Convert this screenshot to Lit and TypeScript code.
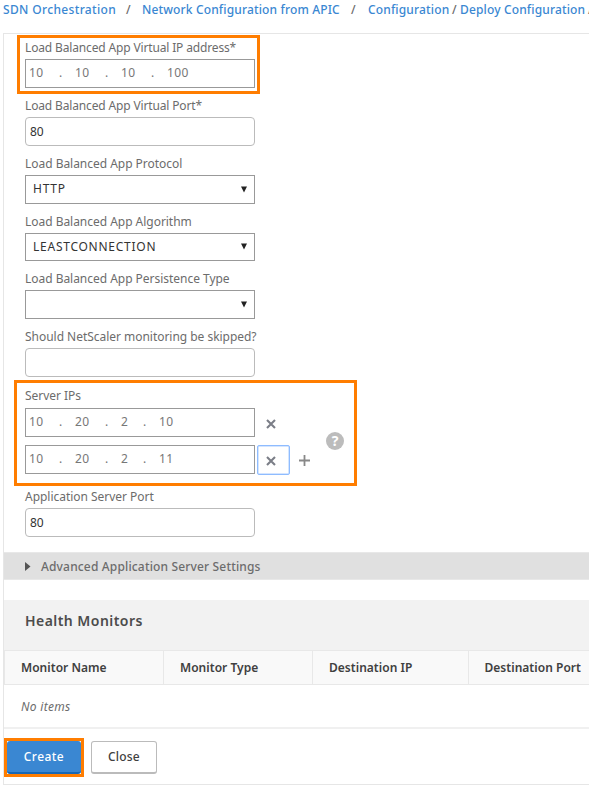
import { LitElement, html, css, svg } from "lit";
import { customElement, property } from "lit/decorators.js";
import { classMap } from "lit/directives/class-map.js";

const crossIcon = html`<svg width="10" height="10" viewBox="0 0 10 10">
  ${svg`<path d="M1 1L9 9M9 1L1 9" stroke="#7b7e87" stroke-width="2.1" fill="none" />`}
</svg>`;

@customElement("ip-input")
export class IpInput extends LitElement {
  @property() value = "";

  static styles = css`
    :host {
      display: flex;
      align-items: center;
      box-sizing: border-box;
      width: 230px;
      height: 28.5px;
      border: 1px solid #999;
      background: #fff;
      padding: 0 0 1px 3px;
      font-size: 12px;
      color: #777;
      letter-spacing: 0.4px;
    }
    .octet { width: 30px; }
    .octet.narrow { width: 22px; }
    .dot { width: 16px; }
  `;

  render() {
    const parts = this.value.split(".");
    return parts.map(
      (p, i) => html`<span class=${classMap({ octet: true, narrow: p.length === 1 })}>${p}</span
        >${i < parts.length - 1 ? html`<span class="dot">.</span>` : ""}`
    );
  }
}

@customElement("app-root")
export class AppRoot extends LitElement {
  static styles = css`
    :host {
      display: block;
      width: 589px;
      height: 788px;
      overflow: hidden;
      background: #fff;
      font-family: "Noto Sans", "Open Sans", sans-serif;
      font-size: 12px;
      line-height: 18px;
      color: #6c6c6c;
      white-space: nowrap;
    }
    svg { display: block; }
    .crumbs { display: flex; height: 33px; padding: 1px 0 0 3px; box-sizing: border-box; font-weight: 500; letter-spacing: 0.15px; }
    .crumbs a, .crumbs span { flex-shrink: 0; }
    .crumbs a { color: #3a87d2; }
    .c1 { width: 123px; letter-spacing: 0.35px; }
    .c2 { width: 209px; }
    .s1 { width: 16px; }
    .s2 { width: 17px; }
    .c3 { width: 84px; }
    .s3 { width: 8px; }
    .c4 { width: 128px; }
    .panel {
      display: flex;
      flex-direction: column;
      box-sizing: border-box;
      height: 752px;
      margin-left: 3px;
      border: 1px solid #e6e6e6;
      border-right: 0;
    }
    .form { height: 518px; padding: 4px 0 0 21px; box-sizing: border-box; }
    .field { position: relative; width: 230px; height: 58px; }
    .field.short { height: 57.5px; }
    .label { height: 21px; padding-top: 1px; box-sizing: border-box; letter-spacing: -0.03px; }
    .label.tight { letter-spacing: -0.15px; }
    .servers .label { padding-top: 0; }
    .box {
      display: flex;
      align-items: center;
      justify-content: space-between;
      box-sizing: border-box;
      width: 230px;
      height: 28.5px;
      border: 1px solid #bbb;
      border-radius: 4px;
      padding: 1px 7px 0 4px;
      color: #333;
    }
    .box.select { border-color: #999; border-radius: 0; padding: 0 7px; letter-spacing: 0.75px; }
    .mark::after {
      content: "";
      position: absolute;
      border: 3px solid #ff7d00;
      inset: -3px -5px 2px -8px;
    }
    .servers { position: relative; width: 332px; height: 100px; margin-top: 2px; }
    .servers.mark::after { inset: -7px 0 1px -11px; }
    .server-body { display: flex; align-items: center; }
    .rows { display: flex; flex-direction: column; gap: 8px; }
    .row { display: flex; align-items: center; height: 29px; }
    .remove {
      display: flex;
      align-items: center;
      justify-content: center;
      box-sizing: border-box;
      width: 33px;
      height: 30px;
      margin-left: 2px;
      padding: 2px 6px 0 0;
      border: 1px solid transparent;
      border-radius: 2px;
    }
    .remove.focus { border: 1px solid #8fbcff; box-shadow: inset 0 0 0 0.5px #a9ccff; }
    .add { margin: 2px 0 0 9px; width: 12px; }
    .help {
      display: flex;
      align-items: center;
      justify-content: center;
      width: 18px;
      height: 18px;
      margin: 0 0 0 15px;
      border-radius: 50%;
      background: #bcbcbc;
      color: #fff;
      font-weight: 700;
      font-size: 14px;
    }
    .advanced {
      display: flex;
      align-items: center;
      gap: 10px;
      height: 28px;
      box-sizing: border-box;
      padding: 1px 0 0 21px;
      border: 1px solid #e8e8e8;
      border-width: 1px 0;
      background: #e0e0e0;
      font-weight: 500;
      letter-spacing: 0.16px;
    }
    .section {
      height: 50px;
      box-sizing: border-box;
      margin-top: 20px;
      padding: 12px 0 0 21px;
      background: #f2f2f2;
      font-size: 14px;
      font-weight: 600;
      color: #4c4c4c;
      letter-spacing: 0.45px;
    }
    .thead { display: flex; height: 35px; box-sizing: border-box; border: 1px solid #e8e8e8; border-width: 1px 0; background: #f9f9f9; }
    .th { flex-shrink: 0; box-sizing: border-box; padding: 8px 0 0 16px; border-left: 1px solid #e8e8e8; font-weight: 600; color: #404040; letter-spacing: 0.03px; }
    .th:first-child { width: 159px; }
    .th:nth-child(2) { width: 149px; }
    .th:nth-child(3) { width: 155.5px; }
    .th:nth-child(4) { width: 160px; }
    .empty { height: 44px; box-sizing: border-box; padding: 13px 0 0 17px; border-bottom: 2px solid #f0f0f0; font-style: italic; letter-spacing: 0.3px; }
    .actions { display: flex; gap: 10px; padding: 12px 0 0 3px; }
    .btn {
      position: relative;
      display: flex;
      align-items: center;
      justify-content: center;
      box-sizing: border-box;
      height: 33px;
      border-radius: 3px;
      font-weight: 500;
    }
    .btn.primary { width: 74px; background: #3a87d2; border-bottom: 2px solid #1767b5; color: #fff; letter-spacing: 0.45px; }
    .btn.mark::after { inset: -3px -3px -5px -3px; }
    .btn.plain { width: 66px; border: 1px solid #bbb; border-bottom-width: 2px; color: #404040; letter-spacing: 0.2px; }
  `;

  private field(label: string, value: string, kind: "text" | "select" = "text", short = false) {
    return html`<div class=${classMap({ field: true, short })}>
      <div class=${classMap({ label: true, tight: label.endsWith("*") })}>${label}</div>
      <div class=${classMap({ box: true, select: kind === "select" })}>
        <span>${value}</span>
        ${kind === "select"
          ? html`<svg width="6" height="7" viewBox="0 0 6 7"><path d="M0 .5H6L3 6.5Z" fill="#222" /></svg>`
          : ""}
      </div>
    </div>`;
  }

  render() {
    return html`
      <nav class="crumbs">
        <a class="c1">SDN Orchestration</a><span class="s1">/</span>
        <a class="c2">Network Configuration from APIC</a><span class="s2">/</span>
        <a class="c3">Configuration</a><span class="s3">/</span>
        <a class="c4">Deploy Configuration</a><span>/</span>
      </nav>
      <main class="panel">
        <div class="form">
          <div class="field mark">
            <div class="label tight">Load Balanced App Virtual IP address*</div>
            <ip-input value="10.10.10.100"></ip-input>
          </div>
          ${this.field("Load Balanced App Virtual Port*", "80")}
          ${this.field("Load Balanced App Protocol", "HTTP", "select", true)}
          ${this.field("Load Balanced App Algorithm", "LEASTCONNECTION", "select", true)}
          ${this.field("Load Balanced App Persistence Type", "", "select")}
          ${this.field("Should NetScaler monitoring be skipped?", "")}
          <div class="servers mark">
            <div class="label">Server IPs</div>
            <div class="server-body">
              <div class="rows">
                <div class="row">
                  <ip-input value="10.20.2.10"></ip-input><span class="remove">${crossIcon}</span>
                </div>
                <div class="row">
                  <ip-input value="10.20.2.11"></ip-input><span class="remove focus">${crossIcon}</span>
                  <span class="add"><svg width="11" height="11" viewBox="0 0 11 11"><path d="M5.5 0V11M0 5.5H11" stroke="#888" stroke-width="1.8" /></svg></span>
                </div>
              </div>
              <span class="help">?</span>
            </div>
          </div>
          ${this.field("Application Server Port", "80")}
        </div>
        <div class="advanced">
          <svg width="6" height="9" viewBox="0 0 6 9"><path d="M0 0L5.5 4.5L0 9Z" fill="#555" /></svg>
          <span>Advanced Application Server Settings</span>
        </div>
        <div class="section">Health Monitors</div>
        <div class="thead">
          <div class="th">Monitor Name</div>
          <div class="th">Monitor Type</div>
          <div class="th">Destination IP</div>
          <div class="th">Destination Port</div>
        </div>
        <div class="empty">No items</div>
        <div class="actions">
          <div class="btn primary mark">Create</div>
          <div class="btn plain">Close</div>
        </div>
      </main>
    `;
  }
}
